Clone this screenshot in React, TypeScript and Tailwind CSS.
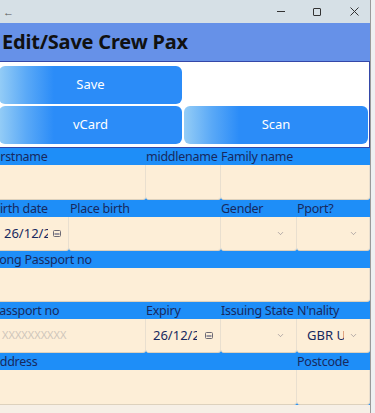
import { ChevronDown } from 'lucide-react'

const font = { fontFamily: '"Noto Sans", "Open Sans", sans-serif' }

const spans: Record<number, string> = { 1: 'col-span-1', 2: 'col-span-2', 3: 'col-span-3', 4: 'col-span-4', 5: 'col-span-5' }

function Label({ text, span = 1, pad = 'pl-0' }: { text: string; span?: number; pad?: string }) {
  return (
    <div className={`${spans[span]} ${pad} h-[17px] overflow-hidden whitespace-nowrap text-[12.5px] leading-[17px] tracking-[-0.25px] text-[#17295e]`}>
      {text}
    </div>
  )
}

function Cell({ span = 1, h = 'h-[34px]', children }: { span?: number; h?: string; children?: React.ReactNode }) {
  return (
    <div className={`${spans[span]} ${h} relative flex items-center overflow-hidden rounded-b-[3px] border-r border-b border-r-[#e9dfcf] border-b-[#ddd1bd] bg-[#fdeed7]`}>
      {children}
    </div>
  )
}

function CalIcon() {
  return (
    <svg width="8" height="7" viewBox="0 0 8 7" className="shrink-0">
      <rect x="0.5" y="0.5" width="7" height="6" rx="1" fill="none" stroke="#6d6a74" strokeWidth="1" />
      <rect x="1.5" y="3" width="5" height="2" fill="#9a96a0" />
    </svg>
  )
}

function DateCell({ pl }: { pl: string }) {
  return (
    <Cell>
      <div className={`flex w-full items-center ${pl} pr-[7px]`}>
        <span className="w-[44px] overflow-hidden whitespace-nowrap text-[13px] text-[#17295e]">26/12/2026</span>
        <div className="ml-auto">
          <CalIcon />
        </div>
      </div>
    </Cell>
  )
}

function SelectCell({ value }: { value?: string }) {
  return (
    <Cell>
      <div className="flex w-full items-center pl-[10px] pr-[11px]">
        <span className="w-[37px] overflow-hidden whitespace-nowrap text-[13px] text-[#17295e]">{value}</span>
        <ChevronDown className="ml-auto h-[9px] w-[9px] text-[#7d7884]" strokeWidth={1.5} />
      </div>
    </Cell>
  )
}

function GradButton({ label, className }: { label: string; className: string }) {
  return (
    <button
      className={`${className} flex h-[38px] items-center justify-center rounded-[6px] bg-[linear-gradient(90deg,#95cdf6_0%,#5aa9f7_15%,#2b8cf8_30%,#2b8cf8_100%)] text-[13px] text-white`}
    >
      {label}
    </button>
  )
}

export default function App() {
  return (
    <div style={font} className="flex h-[413px] w-[375px] overflow-hidden bg-[#eef0f2]">
      <div className="flex h-full w-[371px] flex-col overflow-hidden border-r border-[#9a9a9a] bg-[#f6efe6]">
        {/* title bar */}
        <div className="flex h-[23px] shrink-0 items-center bg-[#d6e0e6] text-[#333]">
          <span className="ml-[3px] text-[11px] leading-none text-[#555]">←</span>
          <div className="ml-auto flex items-center">
            <div className="mr-[28px] h-px w-[8px] bg-[#333]" />
            <div className="mr-[29px] h-[8px] w-[8px] rounded-[1px] border border-[#333]" />
            <svg width="9" height="9" viewBox="0 0 9 9" className="mr-[11px]">
              <path d="M0.5 0.5L8.5 8.5M8.5 0.5L0.5 8.5" stroke="#333" strokeWidth="1" />
            </svg>
          </div>
        </div>

        {/* header */}
        <div className="flex h-[38px] shrink-0 items-center bg-[#6691e8] pl-[2px]">
          <h1 className="text-[20px] font-bold tracking-[-0.2px] text-[#111]">Edit/Save Crew Pax</h1>
        </div>

        {/* buttons */}
        <div className="flex h-[87px] shrink-0 flex-col gap-[2px] border border-l-0 border-[#3447a8] bg-white pt-[4px]">
          <div className="flex">
            <GradButton label="Save" className="ml-[-1px] w-[183px]" />
          </div>
          <div className="flex gap-[2px]">
            <GradButton label="vCard" className="ml-[-1px] w-[183px]" />
            <GradButton label="Scan" className="w-[184px]" />
          </div>
        </div>

        {/* form */}
        <div className="shrink-0 overflow-hidden bg-[#1e8ef8]">
          <div className="ml-[-10px] grid grid-cols-[79px_77px_75px_76px_73px]">
            <Label text="Firstname" span={2} pad="pl-px" />
            <Label text="middlename" />
            <Label text="Family name" span={2} />
            <Cell span={2} h="h-[35px]" />
            <Cell h="h-[35px]" />
            <Cell span={2} h="h-[35px]" />

            <Label text="Birth date" pad="pl-[2px]" />
            <Label text="Place birth" pad="pl-px" />
            <Label text="" />
            <Label text="Gender" />
            <Label text="Pport?" />
            <DateCell pl="pl-[14px]" />
            <Cell span={2} />
            <SelectCell />
            <SelectCell />

            <Label text="Long Passport no" span={5} pad="pl-[3px]" />
            <Cell span={5} />

            <Label text="Passport no" span={2} pad="pl-[2px]" />
            <Label text="Expiry" />
            <Label text="Issuing State" />
            <Label text="N'nality" />
            <Cell span={2}>
              <span className="pl-[12px] text-[11px] text-[#cfc6bb]">XXXXXXXXXX</span>
            </Cell>
            <DateCell pl="pl-[7px]" />
            <SelectCell />
            <SelectCell value="GBR UK" />

            <Label text="Address" span={4} pad="pl-[2px]" />
            <Label text="Postcode" />
            <Cell span={4} h="h-[35px]" />
            <Cell h="h-[35px]" />
          </div>
        </div>
      </div>
    </div>
  )
}
